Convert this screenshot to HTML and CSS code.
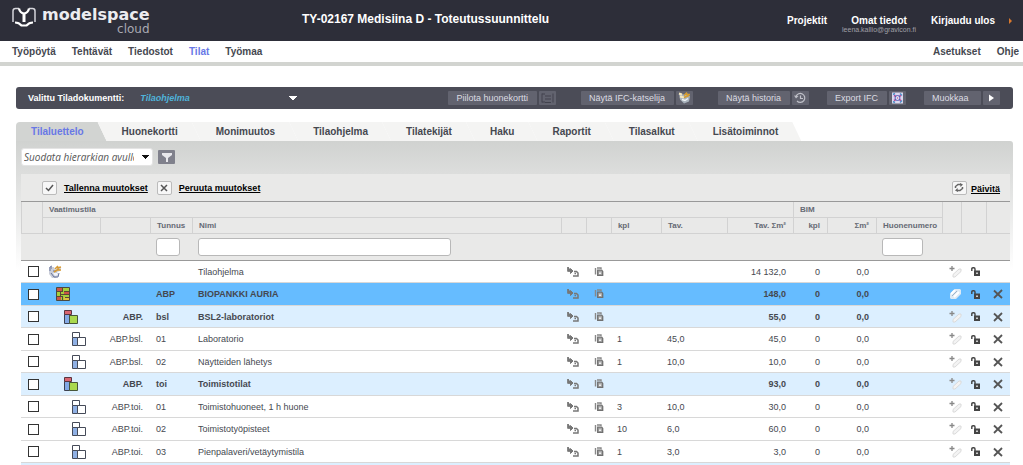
FILE: index.html
```html
<!DOCTYPE html>
<html lang="fi">
<head>
    <meta charset="UTF-8">
    <meta name="viewport" content="width=device-width, initial-scale=1.0">
    <title>modelspace cloud</title>
    <link rel="stylesheet" href="styles.css">
</head>
<body>
    <!-- icons used by the table rows -->
    <svg class="sprite" width="0" height="0" aria-hidden="true">
        <symbol id="i-root" viewBox="0 0 14 14">
            <path d="M1 2h5l1 3 4-3 2 1-1 3-3 1 2 3-3 3-4 0-3-4z" fill="#c9cdd8"/>
            <path d="M1 3h3M1 5h2M5 6h3M3 8l3 4h4l1-4M2 2l2-1" stroke="#66739c" fill="none"/>
            <path d="M7 4l3-3M9 3l4-1M6 7l5-3M10 5h3" stroke="#d79a32" stroke-width="1.5"/>
            <path d="M5 8h4l1 2-3 1z" fill="#f2f4fa"/>
        </symbol>
        <symbol id="i-building" viewBox="0 0 14 14">
            <path d="M.5.5h13v13H.5z" fill="#a5cf3c" stroke="#4a4a42"/>
            <path d="M1 1h5v3H1zM1 9h4v4H1zM8 5h5v3H8z" fill="#cc5547"/>
            <path d="M8 10h5v3H8z" fill="#e0c040"/>
            <path d="M1 4.500h6M6.500 1v3M8 4.500h5M4 7.500h9M4.500 5v5M1 9.500h5M6.500 9v4M9 10.500h4" stroke="#5a4a35" fill="none"/>
        </symbol>
        <symbol id="i-group" viewBox="0 0 14 14">
            <path d="M.5 4.500h5v9h-5z" fill="#83a9e6" stroke="#3d4150"/>
            <path d="M.5.5h7v4h-7z" fill="#d96570" stroke="#5a3540"/>
            <path d="M5.500 5.500h8v8h-8z" fill="#a9d94e" stroke="#46563a"/>
        </symbol>
        <symbol id="i-space" viewBox="0 0 14 14">
            <path d="M.5 5.500h5v8h-5z" fill="#8fb0e4" stroke="#454a58"/>
            <path d="M.5.5h7v5h-7z" fill="#fff" stroke="#454a58"/>
            <path d="M5.500 5.500h8v8h-8z" fill="#fff" stroke="#454a58"/>
        </symbol>
        <symbol id="i-move" viewBox="0 0 12 10">
            <path d="M1 0v4h4M3.500 1.500v5L6 4z" fill="#777" stroke="#777"/>
            <path d="M1 0v4h4" fill="none" stroke="#777" stroke-width="1.500"/>
            <path d="M7 4.500h2.500L11 6v3H6M7.500 6.500H9" fill="none" stroke="#777" stroke-width="1.500"/>
        </symbol>
        <symbol id="i-copy" viewBox="0 0 10 10">
            <path d="M1.500 7.500V1M3 1h4v1" fill="none" stroke="#888" stroke-width="1.400"/>
            <path d="M3.700 3.200h4l1 1.200v4h-5z" fill="#aaa" stroke="#707070" stroke-width="1.300"/>
            <path d="M5 5.500h2v1.500H5z" fill="#eee"/>
        </symbol>
        <symbol id="i-tag" viewBox="0 0 13 12">
            <path d="M4 8.500l6-5.500h2v2.500l-6 5.500H4z" fill="#f3f3f3" stroke="#dadada"/>
            <path d="M3 0v5M.5 2.500h5" stroke="#888" stroke-width="1.300"/>
        </symbol>
        <symbol id="i-tag-on" viewBox="0 0 13 12">
            <path d="M1 6l5-5h5l1 1v4l-5 5H2l-1-1z" fill="#ddeaf5"/>
            <path d="M2 6l4-4M5 9l5-5" stroke="#fff" stroke-width="2"/>
            <path d="M3 8l5-5" stroke="#9fb4c8"/>
        </symbol>
        <symbol id="i-lock" viewBox="0 0 9 9">
            <path d="M.8 4V2Q.8.800 2 .8h.8Q4 .8 4 2v2" fill="none" stroke="#444" stroke-width="1.400"/>
            <path d="M3 3.500h6V9H3z" fill="#444"/>
            <path d="M5 5.500h2v1.500H5z" fill="#ccc"/>
        </symbol>
        <symbol id="i-delete" viewBox="0 0 10 10">
            <path d="M1 1.500l8 7.500" stroke="#555" stroke-width="1.800"/>
            <path d="M9 1L1 9" stroke="#555" stroke-width="1.800"/>
        </symbol>
    </svg>

    <header class="topbar">
        <a href="#" class="logo">
            <svg width="24" height="21" viewBox="0 0 24 21" fill="none" aria-hidden="true">
                <path d="M1 15V4Q1 1.500 3.500 1.500H7M23 15V4Q23 1.500 20.500 1.500H17" stroke="#d4d4da" stroke-width="1.500"/>
                <path d="M7 1.500Q8 6 12 6.500Q16 6 17 1.500" stroke="#fff" stroke-width="2.200"/>
                <path d="M12 6v9" stroke="#fff" stroke-width="3"/>
                <path d="M3 15.500Q7 15.500 9.500 18.500h5Q17 15.500 21 15.500" stroke="#fff" stroke-width="2.200"/>
            </svg>
            <span class="logo-text">
                <span class="logo-name">modelspace</span>
                <span class="logo-sub">cloud</span>
            </span>
        </a>
        <h1>TY-02167 Medisiina D - Toteutussuunnittelu</h1>
        <nav class="user-nav">
            <a href="#">Projektit</a>
            <a href="#" class="account">Omat tiedot<small>leena.kallio@gravicon.fi</small></a>
            <a href="#" class="logout">Kirjaudu ulos</a>
        </nav>
    </header>

    <nav class="main-nav">
        <a href="#">Työpöytä</a>
        <a href="#">Tehtävät</a>
        <a href="#">Tiedostot</a>
        <a href="#" class="active">Tilat</a>
        <a href="#">Työmaa</a>
        <a href="#" class="push">Asetukset</a>
        <a href="#">Ohje</a>
    </nav>

    <main>
        <div class="docbar">
            <label for="doc">Valittu Tiladokumentti:</label>
            <select id="doc" class="doc-select">
                <option>Tilaohjelma</option>
            </select>
            <div class="actions">
                <button type="button" class="wide"><span>Piilota huonekortti</span>
                    <svg width="17" height="14" viewBox="0 0 17 13" fill="none"><path d="M3 2v9M3 2.500h3M3 10.500h3M6 4.500h6M6 7.500h6M14 2v9M6 11h6" stroke="#42434e"/></svg>
                </button>
                <button type="button" class="wide"><span>Näytä IFC-katselija</span>
                    <svg width="17" height="14" viewBox="0 0 17 13" fill="none"><path d="M3 2l5 1 4-1 2 3-1 5-5 2-4-4z" fill="#a9b3bd"/><path d="M3 2l3 1M4 5l4 1" stroke="#f3e6bd" stroke-width="2"/><path d="M8 4l3-3M10 3h4M8 6l5-2" stroke="#d59b2e" stroke-width="1.500"/><path d="M6 8l3 1 3-2" stroke="#eef2f5" stroke-width="1.500"/></svg>
                </button>
                <button type="button"><span>Näytä historia</span>
                    <svg width="17" height="14" viewBox="0 0 17 13" fill="none"><path d="M4 5a4.500 4.500 0 1 1 1 4.500M8.500 4v3h2.500" stroke="#bfc0c8" stroke-width="1.200"/><path d="M2 4l2 3 2.500-2.500z" fill="#bfc0c8"/></svg>
                </button>
                <button type="button"><span>Export IFC</span>
                    <svg width="17" height="14" viewBox="0 0 17 13" fill="none"><path d="M3 1h11v11H3z" fill="#dcd8ee"/><path d="M4 3l2-1M11 2l2 2M4 10l2 1M11 11l2-2" stroke="#4a90c8" stroke-width="1.500"/><path d="M5 4l2 1M12 4l-2 1M5 9l2-1M12 9l-2-1" stroke="#b34793" stroke-width="1.500"/><circle cx="8.500" cy="6.500" r="2.500" stroke="#5061b8"/><path d="M8 6h1v1H8z" fill="#c33b6a"/></svg>
                </button>
                <button type="button"><span>Muokkaa</span>
                    <svg width="17" height="14" viewBox="0 0 17 13"><path d="M6 3l5 3.500L6 10z" fill="#fff"/></svg>
                </button>
            </div>
        </div>

        <nav class="tabs">
            <a href="#" class="active">Tilaluettelo</a>
            <a href="#">Huonekortti</a>
            <a href="#">Monimuutos</a>
            <a href="#">Tilaohjelma</a>
            <a href="#">Tilatekijät</a>
            <a href="#">Haku</a>
            <a href="#">Raportit</a>
            <a href="#">Tilasalkut</a>
            <a href="#">Lisätoiminnot</a>
        </nav>

        <section class="panel">
            <div class="filter">
                <select class="filter-select" aria-label="Suodata">
                    <option>Suodata hierarkian avulla</option>
                </select>
                <button type="button" class="filter-btn" aria-label="Suodata">
                    <svg width="10" height="9" viewBox="0 0 10 9"><path d="M0 0h10v2L6 5v4H4V5L0 2z" fill="#e8e8ec"/></svg>
                </button>
            </div>

            <div class="sheet">
                <div class="sheet-tools">
                    <button type="button"><span class="tool-icon"><svg width="9" height="8" viewBox="0 0 9 8" fill="none"><path d="M1 4l2.500 2.500L8 1" stroke="#555" stroke-width="1.500"/></svg></span><u>Tallenna muutokset</u></button>
                    <button type="button"><span class="tool-icon"><svg width="8" height="8" viewBox="0 0 8 8" fill="none"><path d="M1 1l6 6M7 1L1 7" stroke="#555" stroke-width="1.500"/></svg></span><u>Peruuta muutokset</u></button>
                    <button type="button" class="refresh"><span class="tool-icon"><svg width="10" height="9" viewBox="0 0 10 9" fill="none"><path d="M1.500 5V3.500L4 1.500h3M8.500 4v1.500L6 7.500H3" stroke="#666" stroke-width="1.500"/><path d="M6 0l3 1.500L6.500 4zM4 9L1 7.500 3.500 5z" fill="#666"/></svg></span><u>Päivitä</u></button>
                </div>

                <table>
                    <colgroup>
                        <col class="c-check"><col class="c-icon"><col class="c-parent"><col class="c-code"><col>
                        <col class="c-act"><col class="c-act"><col class="c-kpl"><col class="c-tav"><col class="c-sum">
                        <col class="c-bkpl"><col class="c-bsum"><col class="c-room"><col class="c-tag"><col class="c-lock"><col class="c-del">
                    </colgroup>
                    <thead>
                        <tr class="head">
                            <th rowspan="2"></th>
                            <th colspan="9">Vaatimustila</th>
                            <th colspan="3">BIM</th>
                            <th rowspan="2"></th>
                            <th rowspan="2"></th>
                            <th rowspan="2"></th>
                        </tr>
                        <tr class="head">
                            <th></th>
                            <th></th>
                            <th>Tunnus</th>
                            <th>Nimi</th>
                            <th></th>
                            <th></th>
                            <th>kpl</th>
                            <th>Tav.</th>
                            <th class="num">Tav. Σm²</th>
                            <th class="num">kpl</th>
                            <th class="num">Σm²</th>
                            <th>Huonenumero</th>
                        </tr>
                        <tr class="search">
                            <td colspan="3"></td>
                            <td><input type="text" class="in-code" aria-label="Tunnus"></td>
                            <td><input type="text" class="in-name" aria-label="Nimi"></td>
                            <td colspan="7"></td>
                            <td><input type="text" class="in-room" aria-label="Huonenumero"></td>
                            <td colspan="3"></td>
                        </tr>
                    </thead>
                    <tbody id="rows"></tbody>
                    <tfoot>
                        <tr><td colspan="16"></td></tr>
                    </tfoot>
                </table>
            </div>
        </section>
    </main>

    <script src="script.js"></script>
</body>
</html>
```
FILE: styles.css
```css
* {
    box-sizing: border-box;
}

body {
    margin: 0;
    background: #fff;
    color: #454850;
    font-family: "Liberation Sans", Arial, sans-serif;
    font-size: 9px;
    height: 100vh;
    overflow: hidden;
}

a {
    color: inherit;
    text-decoration: none;
}

button {
    border: 0;
    padding: 0;
    background: none;
    font-family: inherit;
    font-size: 9px;
    cursor: pointer;
}

svg {
    display: block;
}

.sprite {
    position: absolute;
}

/* header */
.topbar {
    display: grid;
    grid-template-columns: 29% auto 1fr;
    height: 41px;
    padding: 0 11px 0 12px;
    background: #2d2e39;
    color: #fff;
}

.logo {
    display: flex;
    gap: 6px;
    padding-top: 7px;
}

.logo-text {
    display: flex;
    flex-direction: column;
    font-family: "DejaVu Sans", sans-serif;
}

.logo-name {
    font-size: 16px;
    line-height: 15px;
    font-weight: bold;
    color: #ececf0;
}

.logo-sub {
    align-self: flex-end;
    font-size: 12px;
    line-height: 14px;
    color: #a9a9b2;
}

h1 {
    margin: 0;
    padding-top: 12px;
    font-size: 12px;
    line-height: 14px;
}

.user-nav {
    display: flex;
    justify-content: flex-end;
    gap: 15px;
    padding-top: 15px;
    font-size: 10px;
    line-height: 12px;
    font-weight: bold;
}

.account {
    display: flex;
    flex-direction: column;
    align-items: center;
}

.account small {
    font-size: 7px;
    line-height: 5px;
    font-weight: normal;
    color: #a0a0a8;
}

.logout::after {
    content: "";
    display: inline-block;
    margin-left: 14px;
    border: 3px solid transparent;
    border-left-color: #d9782d;
    border-right: 0;
}

.main-nav {
    display: flex;
    gap: 16px;
    height: 25px;
    padding: 4px 4px 0 12px;
    border-bottom: 4px solid #d2d4d0;
    font-size: 10px;
    line-height: 13px;
    font-weight: bold;
}

.main-nav .active,
.tabs .active {
    color: #6878e6;
}

.main-nav .push {
    margin-left: auto;
}

main {
    padding: 21px 10px 0 16px;
}

/* document bar */
.docbar {
    display: flex;
    align-items: center;
    height: 22px;
    padding: 0 13px 0 12px;
    border-radius: 3px;
    background: #4b4c57;
    color: #fff;
    font-weight: bold;
}

.doc-select {
    appearance: none;
    width: 157px;
    margin-left: 16px;
    padding: 0;
    border: 0;
    background: linear-gradient(to bottom left, #fff 50%, transparent 50%) right 4px center / 4px 5px no-repeat,
        linear-gradient(to bottom right, #fff 50%, transparent 50%) right 0 center / 4px 5px no-repeat;
    color: #4fb3d9;
    font: italic bold 9px "Liberation Sans", Arial, sans-serif;
}

.doc-select option {
    color: #333;
}

.actions {
    display: flex;
    gap: 18px;
    margin-left: auto;
}

.actions button {
    display: flex;
    gap: 2px;
    color: #dcdce2;
    line-height: 14px;
}

.actions .wide {
    margin-right: 7px;
}

.actions span {
    min-width: 57px;
    padding: 0 9px 0 8px;
    text-align: left;
}

.actions span,
.actions svg {
    border-radius: 1px;
    background: #62636f;
}

/* tabs */
.tabs {
    display: flex;
    margin-top: 13px;
    font-size: 10px;
    line-height: 19px;
    font-weight: bold;
}

.tabs a {
    height: 19px;
    margin-left: -9px;
    padding: 0 23px 0 24px;
    background: #f4f4f3;
    clip-path: polygon(0 0, calc(100% - 9px) 0, 100% 100%, 9px 100%);
}

.tabs .active {
    margin-left: 0;
    padding-left: 15px;
    border-radius: 4px 0 0 0;
    background: #d2d4d2;
    clip-path: polygon(0 0, calc(100% - 9px) 0, 100% 100%, 0 100%);
}

/* list panel */
.panel {
    padding: 7px 3px 0 5px;
    border-radius: 0 3px 0 0;
    background: linear-gradient(#d0d2d0, #dddedd 34px, #fff 130px);
}

.filter {
    display: flex;
    align-items: center;
    gap: 5px;
    padding-bottom: 8px;
}

.filter-select {
    appearance: none;
    width: 132px;
    height: 18px;
    padding: 0 18px 0 2px;
    border: 1px solid #e4e4e4;
    border-radius: 3px;
    background: linear-gradient(to bottom left, #111 50%, transparent 50%) right 6px center / 4px 4px no-repeat,
        linear-gradient(to bottom right, #111 50%, transparent 50%) right 2px center / 4px 4px no-repeat, #fff;
    color: #555;
    font: italic 10px "Open Sans", sans-serif;
}

.filter-btn {
    display: flex;
    align-items: center;
    justify-content: center;
    width: 17px;
    height: 14px;
    border-radius: 1px;
    background: #80818c;
}

.sheet {
    background: #e9e9e8;
}

.sheet-tools {
    display: flex;
    gap: 9px;
    height: 27px;
    padding: 0 10px 0 21px;
}

.sheet-tools button {
    display: flex;
    align-items: center;
    gap: 7px;
    color: #000;
    font-weight: bold;
}

.sheet-tools .refresh {
    gap: 4px;
    margin-left: auto;
}

.refresh u {
    padding-top: 3px;
}

.tool-icon {
    display: flex;
    align-items: center;
    justify-content: center;
    width: 15px;
    height: 14px;
    border: 1px solid #bbb;
    border-radius: 2px;
    background: #f7f7f7;
}

/* table */
table {
    width: 100%;
    table-layout: fixed;
    border-collapse: separate;
    border-spacing: 0;
    border-top: 1px solid #999;
}

.c-check { width: 21px; }
.c-icon { width: 58px; }
.c-parent { width: 50px; }
.c-code { width: 42px; }
.c-act { width: 25px; }
.c-kpl { width: 50px; }
.c-tav { width: 66px; }
.c-sum { width: 66px; }
.c-bkpl { width: 34px; }
.c-bsum { width: 49px; }
.c-room { width: 66px; }
.c-tag { width: 19px; }
.c-lock { width: 25px; }
.c-del { width: 24px; }

th,
td {
    padding: 0 6px;
    text-align: left;
    white-space: nowrap;
}

.head th {
    height: 16px;
    border-left: 1px solid #d2d2d2;
    border-bottom: 1px solid #d2d2d2;
    color: #666974;
    font-size: 8px;
}

.search td {
    height: 27px;
    border-bottom: 1px solid #999;
}

.search input {
    display: block;
    height: 18px;
    border: 1px solid #b8b8b8;
    border-radius: 3px;
    background: #fff;
    font-size: 9px;
}

.in-code { width: 24px; }
.in-name { width: 253px; }
.in-room { width: 41px; }

tbody tr {
    background: #fff;
}

tbody td {
    height: 22px;
    border-bottom: 1px solid #d8d8d8;
}

tbody tr:nth-child(even) td {
    height: 23px;
}

tbody .building {
    background: #66bcff;
    font-weight: bold;
}

tbody .group,
tfoot tr {
    background: #dcefff;
    font-weight: bold;
}

tfoot td {
    height: 22px;
}

th.num,
td.num,
td.parent {
    padding-right: 7px;
    text-align: right;
}

td.pick,
td.act {
    padding-left: 7px;
}

td.copy {
    padding-left: 8px;
}

td.lock {
    padding-left: 10px;
}

tbody input {
    appearance: none;
    display: block;
    width: 11px;
    height: 11px;
    margin: 0;
    border: 1px solid #333;
    background: #fff;
}

.lvl0 { margin-left: 0; }
.lvl1 { margin-left: 8px; }
.lvl2 { margin-left: 16px; }
.lvl3 { margin-left: 24px; }
```
FILE: script.js
```js
const rows = [
    { level: 0, name: 'Tilaohjelma', sum: '14 132,0' },
    { level: 1, code: 'ABP', name: 'BIOPANKKI AURIA', sum: '148,0' },
    { level: 2, parent: 'ABP.', code: 'bsl', name: 'BSL2-laboratoriot', sum: '55,0' },
    { level: 3, parent: 'ABP.bsl.', code: '01', name: 'Laboratorio', kpl: '1', tav: '45,0', sum: '45,0' },
    { level: 3, parent: 'ABP.bsl.', code: '02', name: 'Näytteiden lähetys', kpl: '1', tav: '10,0', sum: '10,0' },
    { level: 2, parent: 'ABP.', code: 'toi', name: 'Toimistotilat', sum: '93,0' },
    { level: 3, parent: 'ABP.toi.', code: '01', name: 'Toimistohuoneet, 1 h huone', kpl: '3', tav: '10,0', sum: '30,0' },
    { level: 3, parent: 'ABP.toi.', code: '02', name: 'Toimistotyöpisteet', kpl: '10', tav: '6,0', sum: '60,0' },
    { level: 3, parent: 'ABP.toi.', code: '03', name: 'Pienpalaveri/vetäytymistila', kpl: '1', tav: '3,0', sum: '3,0' }
];

const types = ['root', 'building', 'group', 'space'];

function icon(id, w, h, cls) {
    return `<svg class="${cls || ''}" width="${w}" height="${h}"><use href="#i-${id}"/></svg>`;
}

document.getElementById('rows').innerHTML = rows.map(r => `
    <tr class="${types[r.level]}">
        <td class="pick"><input type="checkbox" aria-label="${r.name}"></td>
        <td>${icon(types[r.level], 14, 14, 'lvl' + r.level)}</td>
        <td class="parent">${r.parent || ''}</td>
        <td>${r.code || ''}</td>
        <td>${r.name}</td>
        <td>${icon('move', 12, 10)}</td>
        <td class="copy">${icon('copy', 10, 10)}</td>
        <td>${r.kpl || ''}</td>
        <td>${r.tav || ''}</td>
        <td class="num">${r.sum}</td>
        <td class="num">0</td>
        <td class="num">0,0</td>
        <td></td>
        <td class="act">${icon(r.level === 1 ? 'tag-on' : 'tag', 13, 12)}</td>
        <td class="lock">${icon('lock', 9, 9)}</td>
        <td class="act">${r.level ? icon('delete', 10, 10) : ''}</td>
    </tr>`).join('');
```
